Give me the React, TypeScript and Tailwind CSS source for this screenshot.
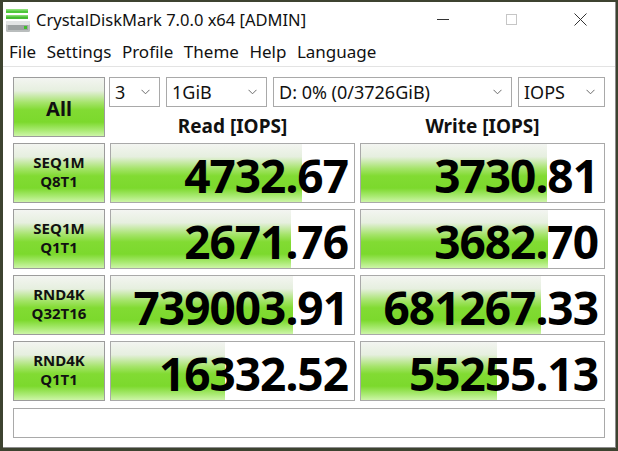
import React from "react";

const ROWS = [
  { l1: "SEQ1M", l2: "Q8T1", read: "4732.67", write: "3730.81", rf: 191, wf: 186 },
  { l1: "SEQ1M", l2: "Q1T1", read: "2671.76", write: "3682.70", rf: 180, wf: 187 },
  { l1: "RND4K", l2: "Q32T16", read: "739003.91", write: "681267.33", rf: 182, wf: 180 },
  { l1: "RND4K", l2: "Q1T1", read: "16332.52", write: "55255.13", rf: 114, wf: 136 },
];

const MENU = ["File", "Settings", "Profile", "Theme", "Help", "Language"];

const GREEN =
  "bg-[linear-gradient(to_bottom,#f3f5f1_0%,#e6efdf_22%,#a6e46c_42%,#82db33_55%,#7cd92d_76%,#a9ea72_90%,#cdf5a8_100%)]";

const Chevron = () => (
  <svg width="9" height="6" viewBox="0 0 9 6" className="shrink-0">
    <polyline points="0.5,0.8 4.5,4.8 8.5,0.8" fill="none" stroke="#6b6b6b" strokeWidth="1" />
  </svg>
);

const Select = ({ value, className }: { value: string; className: string }) => (
  <div
    className={`flex h-[30px] items-center justify-between border border-[#a9a9a9] bg-white pl-[5px] pr-[9px] text-[18px] text-[#111] ${className}`}
  >
    <span className="leading-none">{value}</span>
    <Chevron />
  </div>
);

const LabelButton = ({ l1, l2 }: { l1: string; l2: string }) => (
  <div
    className={`flex h-[60px] flex-col items-center justify-center border border-[#9c9c9c] ${GREEN} pb-[3px] text-[15px] font-bold leading-[19px] text-[#111]`}
  >
    <span>{l1}</span>
    <span>{l2}</span>
  </div>
);

const ValueCell = ({ value, fill }: { value: string; fill: number }) => (
  <div className="relative h-[60px] border border-[#a9a9a9] bg-white">
    <div className={`absolute inset-y-0 left-0 ${GREEN}`} style={{ width: fill }} />
    <div className="relative flex h-full items-center justify-end pr-[6px] pt-[4px] text-[46px] font-bold leading-none tracking-[-1px] text-black">
      {value}
    </div>
  </div>
);

const AppIcon = () => (
  <svg width="26" height="26" viewBox="0 0 26 26">
    <rect x="1" y="2" width="22" height="4" fill="#4fc83a" />
    <rect x="1" y="2" width="22" height="1.5" fill="#8fe27a" />
    <rect x="1" y="8" width="22" height="4" fill="#45bb31" />
    <rect x="1" y="8" width="22" height="1.5" fill="#86dc70" />
    <rect x="1" y="14" width="24" height="11" rx="1.5" fill="#b9bdbd" />
    <rect x="1" y="14" width="24" height="4" rx="1.5" fill="#e2e4e4" />
    <rect x="3" y="18" width="20" height="5" fill="#9da2a2" />
    <rect x="19" y="19" width="3" height="3" fill="#3fbf2a" />
  </svg>
);

export default function App() {
  return (
    <div className="h-[451px] w-[618px] overflow-hidden bg-[#3d4330] pl-[3px] pt-[2px] font-['Noto_Sans','Open_Sans',sans-serif]">
      <div className="flex h-[446px] w-[613px] flex-col border-r border-b border-[#8d8d8d] bg-white">
        {/* title bar */}
        <div className="flex h-[34px] items-center">
          <div className="ml-[2px] mr-[5px] mt-[1px]">
            <AppIcon />
          </div>
          <span className="mt-[2px] text-[16.5px] leading-none text-[#111]">CrystalDiskMark 7.0.0 x64 [ADMIN]</span>
          <div className="ml-auto flex h-full items-center">
            <div className="flex w-[68px] justify-center">
              <div className="h-px w-[12px] bg-[#333]" />
            </div>
            <div className="flex w-[68px] justify-center">
              <div className="h-[11px] w-[11px] border border-[#c6c6c6]" />
            </div>
            <div className="flex w-[70px] justify-center">
              <svg width="13" height="13" viewBox="0 0 13 13">
                <path d="M0.5 0.5 L12.5 12.5 M12.5 0.5 L0.5 12.5" stroke="#333" strokeWidth="1" />
              </svg>
            </div>
          </div>
        </div>

        {/* menu */}
        <div className="flex h-[31px] items-center gap-[10.5px] border-b border-[#e3e3e3] pl-[6px] text-[17px] text-[#111]">
          {MENU.map((m) => (
            <span key={m} className="leading-none">
              {m}
            </span>
          ))}
        </div>

        {/* body */}
        <div className="grid grid-cols-[92px_245px_245px] gap-x-[5px] px-[10px] pt-[10px]">
          <div className={`flex h-[60px] items-center justify-center border border-[#9c9c9c] ${GREEN} pt-[3px] text-[20px] font-bold text-[#111]`}>
            All
          </div>
          <div className="col-span-2 flex flex-col">
            <div className="ml-[-1px] flex gap-[6px]">
              <Select value="3" className="w-[51px]" />
              <Select value="1GiB" className="w-[101px]" />
              <Select value="D: 0% (0/3726GiB)" className="w-[239px]" />
              <Select value="IOPS" className="w-[87px]" />
            </div>
            <div className="grid h-[30px] grid-cols-2 gap-x-[5px] text-[19px] font-bold text-[#111]">
              <div className="flex items-end justify-center pb-[1px] leading-none">Read [IOPS]</div>
              <div className="flex items-end justify-center pb-[1px] leading-none">Write [IOPS]</div>
            </div>
          </div>

          <div className="col-span-3 mt-[6px] grid grid-cols-[92px_245px_245px] gap-x-[5px] gap-y-[6px]">
            {ROWS.map((r, i) => (
              <React.Fragment key={i}>
                <LabelButton l1={r.l1} l2={r.l2} />
                <ValueCell value={r.read} fill={r.rf} />
                <ValueCell value={r.write} fill={r.wf} />
              </React.Fragment>
            ))}
          </div>

          <div className="col-span-3 mt-[7px] h-[30px] border border-[#a9a9a9] bg-white" />
        </div>
      </div>
    </div>
  );
}
